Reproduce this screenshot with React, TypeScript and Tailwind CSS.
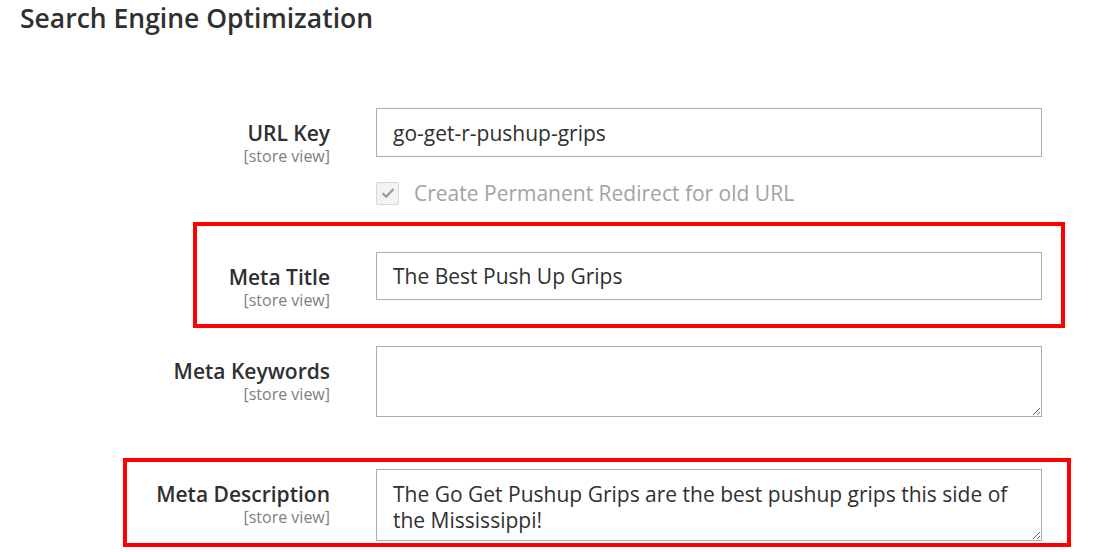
import React from 'react';

const font = { fontFamily: '"Open Sans", "Liberation Sans", sans-serif' };

const Label = ({ title, w }: { title: string; w: string }) => (
  <div className={`${w} shrink-0 pt-[11px] text-right`}>
    <div className="text-[21px] leading-[28px] font-semibold text-[#303030]">{title}</div>
    <div className="text-[16px] leading-[18px] text-[#808080]">[store view]</div>
  </div>
);

export default function App() {
  return (
    <div className="w-[1097px] h-[552px] bg-white overflow-hidden" style={font}>
      <h1 className="pl-[20px] pt-[1px] text-[26.5px] leading-[34px] font-semibold text-[#303030]">
        Search Engine Optimization
      </h1>

      {/* URL Key */}
      <div className="flex mt-[73px]">
        <Label title="URL Key" w="w-[330px]" />
        <div className="ml-[46px]">
          <input
            readOnly
            value="go-get-r-pushup-grips"
            className="w-[666px] h-[49px] border border-[#adadad] px-[16px] text-[21px] text-[#303030] outline-none"
          />
          <label className="flex items-center mt-[24px]">
            <span className="w-[23px] h-[23px] border border-[#d6d6d6] bg-[#f3f3f3] rounded-[2px] flex items-center justify-center">
              <svg width="14" height="12" viewBox="0 0 14 12" fill="none">
                <path d="M1.5 6.2 L5.2 9.6 L12.5 2" stroke="#9a9a9a" strokeWidth="2.2" />
              </svg>
            </span>
            <span className="ml-[15px] text-[21px] leading-[24px] text-[#a3a3a3]">
              Create Permanent Redirect for old URL
            </span>
          </label>
        </div>
      </div>

      {/* Meta Title */}
      <div className="mt-[17px] ml-[193px] w-[872px] h-[106px] border-4 border-[#ff0000] flex pt-[26px]">
        <Label title="Meta Title" w="w-[133px]" />
        <input
          readOnly
          value="The Best Push Up Grips"
          className="ml-[46px] w-[666px] h-[48px] border border-[#adadad] px-[16px] text-[21px] text-[#303030] outline-none"
        />
      </div>

      {/* Meta Keywords */}
      <div className="flex mt-[18px]">
        <Label title="Meta Keywords" w="w-[330px]" />
        <textarea
          readOnly
          className="ml-[46px] w-[666px] h-[71px] border border-[#adadad] px-[16px] py-[10px] text-[21px] text-[#303030] outline-none"
        />
      </div>

      {/* Meta Description */}
      <div className="mt-[41px] ml-[123px] w-[948px] h-[89px] border-4 border-[#ff0000] flex pt-[7px]">
        <Label title="Meta Description" w="w-[203px]" />
        <textarea
          readOnly
          value="The Go Get Pushup Grips are the best pushup grips this side of the Mississippi!"
          className="ml-[46px] w-[666px] h-[72px] border border-[#adadad] px-[16px] pt-[11px] text-[21px] leading-[26px] text-[#303030] outline-none overflow-hidden"
        />
      </div>
    </div>
  );
}
